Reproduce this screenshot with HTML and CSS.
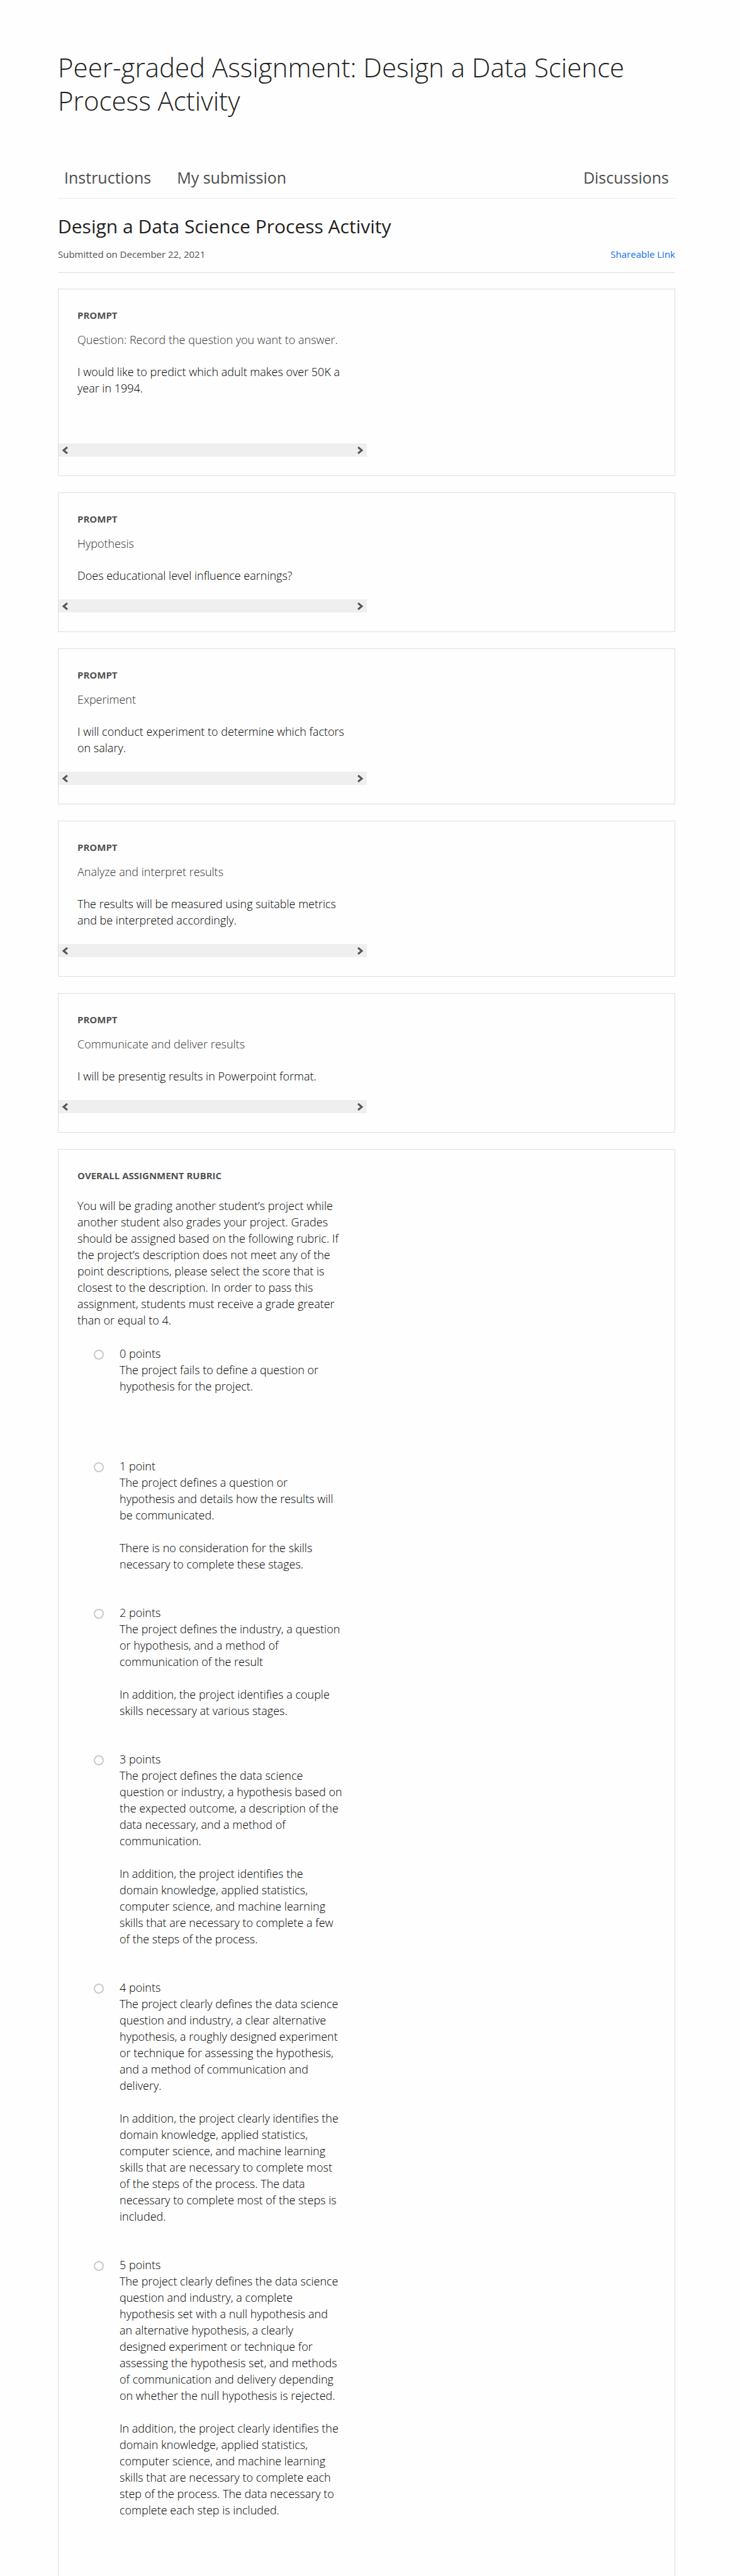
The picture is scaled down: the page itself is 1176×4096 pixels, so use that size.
FILE: index.html
```html
<!DOCTYPE html>
<html lang="en">
<head>
<meta charset="utf-8">
<meta name="viewport" content="width=device-width, initial-scale=1">
<title>Peer-graded Assignment: Design a Data Science Process Activity</title>
<link rel="stylesheet" href="styles.css">
</head>
<body>
<svg class="symbols" aria-hidden="true">
  <symbol id="arrow" viewBox="0 0 10 12"><path d="M9 1L3 6l6 5" fill="none" stroke="#555" stroke-width="3"/></symbol>
</svg>
<main class="page">
  <h1 class="title">Peer-graded Assignment: Design a Data Science Process Activity</h1>
  <nav class="tabs">
    <a href="#instructions">Instructions</a>
    <a href="#submission">My submission</a>
    <a href="#discussions" class="tab-end">Discussions</a>
  </nav>
  <header class="submission">
    <h2 class="submission-title">Design a Data Science Process Activity</h2>
    <div class="submission-meta">
      <span>Submitted on December 22, 2021</span>
      <a href="#share" class="share">Shareable Link</a>
    </div>
  </header>

  <section class="card">
    <div class="column">
      <h3 class="label">PROMPT</h3>
      <p class="question">Question: Record the question you want to answer.</p>
      <p class="answer answer-tall">I would like to predict which adult makes over 50K a year in 1994.</p>
    </div>
    <div class="scroller"><button type="button" aria-label="Scroll left"><svg class="arrow"><use href="#arrow"/></svg></button><button type="button" aria-label="Scroll right"><svg class="arrow flip"><use href="#arrow"/></svg></button></div>
  </section>

  <section class="card">
    <div class="column">
      <h3 class="label">PROMPT</h3>
      <p class="question">Hypothesis</p>
      <p class="answer">Does educational level influence earnings?</p>
    </div>
    <div class="scroller"><button type="button" aria-label="Scroll left"><svg class="arrow"><use href="#arrow"/></svg></button><button type="button" aria-label="Scroll right"><svg class="arrow flip"><use href="#arrow"/></svg></button></div>
  </section>

  <section class="card">
    <div class="column">
      <h3 class="label">PROMPT</h3>
      <p class="question">Experiment</p>
      <p class="answer">I will conduct experiment to determine which factors on salary.</p>
    </div>
    <div class="scroller"><button type="button" aria-label="Scroll left"><svg class="arrow"><use href="#arrow"/></svg></button><button type="button" aria-label="Scroll right"><svg class="arrow flip"><use href="#arrow"/></svg></button></div>
  </section>

  <section class="card">
    <div class="column">
      <h3 class="label">PROMPT</h3>
      <p class="question">Analyze and interpret results</p>
      <p class="answer">The results will be measured using suitable metrics and be interpreted accordingly.</p>
    </div>
    <div class="scroller"><button type="button" aria-label="Scroll left"><svg class="arrow"><use href="#arrow"/></svg></button><button type="button" aria-label="Scroll right"><svg class="arrow flip"><use href="#arrow"/></svg></button></div>
  </section>

  <section class="card">
    <div class="column">
      <h3 class="label">PROMPT</h3>
      <p class="question">Communicate and deliver results</p>
      <p class="answer">I will be presentig results in Powerpoint format.</p>
    </div>
    <div class="scroller"><button type="button" aria-label="Scroll left"><svg class="arrow"><use href="#arrow"/></svg></button><button type="button" aria-label="Scroll right"><svg class="arrow flip"><use href="#arrow"/></svg></button></div>
  </section>

  <section class="card rubric">
    <div class="column">
      <h3 class="label">OVERALL ASSIGNMENT RUBRIC</h3>
      <p class="intro">You will be grading another student’s project while another student also grades your project. Grades should be assigned based on the following rubric. If the project’s description does not meet any of the point descriptions, please select the score that is closest to the description. In order to pass this assignment, students must receive a grade greater than or equal to 4.</p>
      <div class="options">
        <div class="option option-tall">
          <input type="radio" name="score" id="s0">
          <label for="s0"><span>0 points</span>
            <span>The project fails to define a question or hypothesis for the project.</span></label>
        </div>
        <div class="option">
          <input type="radio" name="score" id="s1">
          <label for="s1"><span>1 point</span>
            <span>The project defines a question or hypothesis and details how the results will be communicated.</span>
            <span class="more">There is no consideration for the skills necessary to complete these stages.</span></label>
        </div>
        <div class="option">
          <input type="radio" name="score" id="s2">
          <label for="s2"><span>2 points</span>
            <span>The project defines the industry, a question or hypothesis, and a method of communication of the result</span>
            <span class="more">In addition, the project identifies a couple skills necessary at various stages.</span></label>
        </div>
        <div class="option">
          <input type="radio" name="score" id="s3">
          <label for="s3"><span>3 points</span>
            <span>The project defines the data science question or industry, a hypothesis based on the expected outcome, a description of the data necessary, and a method of communication.</span>
            <span class="more">In addition, the project identifies the domain knowledge, applied statistics, computer science, and machine learning skills that are necessary to complete a few of the steps of the process.</span></label>
        </div>
        <div class="option">
          <input type="radio" name="score" id="s4">
          <label for="s4"><span>4 points</span>
            <span>The project clearly defines the data science question and industry, a clear alternative hypothesis, a roughly designed experiment or technique for assessing the hypothesis, and a method of communication and delivery.</span>
            <span class="more">In addition, the project clearly identifies the domain knowledge, applied statistics, computer science, and machine learning skills that are necessary to complete most of the steps of the process. The data necessary to complete most of the steps is included.</span></label>
        </div>
        <div class="option">
          <input type="radio" name="score" id="s5">
          <label for="s5"><span>5 points</span>
            <span>The project clearly defines the data science question and industry, a complete hypothesis set with a null hypothesis and an&nbsp;alternative hypothesis, a clearly designed&nbsp;experiment or technique for assessing the hypothesis set, and methods of communication and delivery depending on whether the null hypothesis is rejected.</span>
            <span class="more">In addition, the project clearly identifies the domain knowledge, applied statistics, computer science, and machine learning skills that are necessary to complete each step of the process. The data necessary to complete each step is included.</span></label>
        </div>
      </div>
    </div>
  </section>
</main>
</body>
</html>
```
FILE: styles.css
```css
* {
  box-sizing: border-box;
}

body {
  margin: 0;
  background: #fefefe;
  color: #000;
  font: 300 18px/26px "Open Sans", sans-serif;
}

h1, h2, h3, p {
  margin: 0;
}

a {
  color: inherit;
  text-decoration: none;
}

.symbols {
  display: none;
}

.page {
  display: flex;
  flex-direction: column;
  min-height: 100vh;
  padding: 80px 103px 0 92px;
}

.title {
  color: #1f1f1f;
  font-size: 42px;
  font-weight: 300;
  line-height: 53px;
}

.tabs {
  display: flex;
  gap: 41px;
  margin-top: 80px;
  padding: 0 10px 17px;
  border-bottom: 1px solid #ececec;
  color: #4c4c4c;
  font-size: 25px;
  font-weight: 400;
  line-height: 32px;
}

.tab-end {
  margin-left: auto;
}

.submission {
  padding: 25px 0 19px;
  border-bottom: 1px solid #dcdcdc;
}

.submission-title {
  color: #1f1f1f;
  font-size: 30px;
  font-weight: 400;
  line-height: 38px;
}

.submission-meta {
  display: flex;
  justify-content: space-between;
  margin-top: 15px;
  color: #525252;
  font-size: 15px;
  font-weight: 400;
  line-height: 20px;
}

.share {
  color: #0f6ff0;
}

.card {
  margin-top: 26px;
  padding: 31px 0 30px;
  border: 1px solid #dedede;
}

.submission + .card {
  margin-top: 25px;
}

.column {
  width: 50%;
  padding: 0 30px;
}

.label {
  color: #525252;
  font-size: 15px;
  font-weight: 700;
  line-height: 20px;
}

.question {
  margin-top: 16px;
  color: #333;
}

.answer {
  margin: 25px 0;
}

.answer-tall {
  margin-bottom: 75px;
}

.scroller {
  display: flex;
  justify-content: space-between;
  width: 50%;
  height: 21px;
  background: #efefef;
}

.scroller button {
  display: flex;
  align-items: center;
  justify-content: center;
  width: 20px;
  padding: 0;
  border: 0;
  background: none;
}

.arrow {
  width: 10px;
  height: 12px;
}

.flip {
  transform: scaleX(-1);
}

.rubric {
  flex: 1;
  border-bottom: 0;
}

.intro {
  margin-top: 25px;
}

.options {
  display: flex;
  flex-direction: column;
  gap: 51px;
  margin-top: 27px;
  padding: 0 6px 0 26px;
}

.option {
  display: flex;
  align-items: flex-start;
  gap: 25px;
}

.option-tall {
  padding-bottom: 50px;
}

.option input {
  flex: none;
  appearance: none;
  width: 16px;
  height: 16px;
  margin: 7px 0 0;
  border: 2px solid #c9c9cf;
  border-radius: 50%;
  background: #fff;
}

.option label,
.option span {
  display: block;
}

.option .more {
  margin-top: 26px;
}
```
